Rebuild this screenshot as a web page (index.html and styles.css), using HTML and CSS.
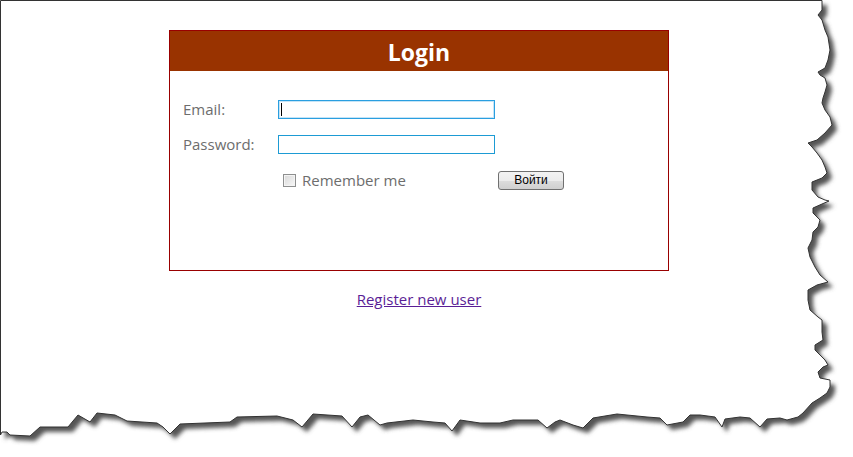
FILE: index.html
```html
<!DOCTYPE html>
<html>
<head>
<meta charset="utf-8">
<title>Login</title>
<link rel="stylesheet" href="styles.css">
</head>
<body>
<svg class="paper" width="853" height="457" viewBox="0 0 853 457" xmlns="http://www.w3.org/2000/svg">
  <defs>
    <filter id="blur" x="-5%" y="-5%" width="110%" height="110%">
      <feGaussianBlur stdDeviation="2"/>
    </filter>
  </defs>
  <g transform="translate(5,5)" filter="url(#blur)">
    <polygon fill="#555" points="0,0 822,0 822,10 818,15 822,20 825,30 828,37 830,50 828,60 825,68 818,72 820,75 825,78 827,85 825,92 823,98 822,103 825,110 830,117 832,125 825,133 817,140 808,143 812,147 817,153 822,160 825,167 827,173 822,178 812,182 812,190 818,197 825,200 829,201 822,204 813,208 813,213 820,220 818,227 813,232 812,240 808,248 810,257 815,267 820,275 828,282 817,285 808,290 808,300 810,310 818,317 822,320 822,332 823,340 815,345 815,350 820,355 825,360 828,365 823,367 818,372 820,378 830,380 830,387 827,393 820,398 812,403 803,413 798,417 787,420 780,418 767,419 760,427 750,418 740,417 725,419 722,427 715,417 700,415 690,415 683,422 667,425 660,418 647,417 617,414 593,418 583,428 573,425 560,420 555,422 547,428 538,420 513,420 500,423 480,423 460,420 452,431 445,423 433,422 413,420 387,423 380,425 368,415 360,417 352,427 342,416 313,414 302,427 293,420 277,416 237,417 230,422 180,424 170,434 163,427 157,423 127,421 115,415 97,413 90,422 78,415 68,427 40,427 30,436 10,435 7,432 2,432 0,435"/>
  </g>
  <polygon fill="#fff" stroke="#333" stroke-width="1" points="0.5,0.5 822,0.5 822,10 818,15 822,20 825,30 828,37 830,50 828,60 825,68 818,72 820,75 825,78 827,85 825,92 823,98 822,103 825,110 830,117 832,125 825,133 817,140 808,143 812,147 817,153 822,160 825,167 827,173 822,178 812,182 812,190 818,197 825,200 829,201 822,204 813,208 813,213 820,220 818,227 813,232 812,240 808,248 810,257 815,267 820,275 828,282 817,285 808,290 808,300 810,310 818,317 822,320 822,332 823,340 815,345 815,350 820,355 825,360 828,365 823,367 818,372 820,378 830,380 830,387 827,393 820,398 812,403 803,413 798,417 787,420 780,418 767,419 760,427 750,418 740,417 725,419 722,427 715,417 700,415 690,415 683,422 667,425 660,418 647,417 617,414 593,418 583,428 573,425 560,420 555,422 547,428 538,420 513,420 500,423 480,423 460,420 452,431 445,423 433,422 413,420 387,423 380,425 368,415 360,417 352,427 342,416 313,414 302,427 293,420 277,416 237,417 230,422 180,424 170,434 163,427 157,423 127,421 115,415 97,413 90,422 78,415 68,427 40,427 30,436 10,435 7,432 2,432 0.5,435"/>
</svg>

<main class="page">
  <section class="login-box">
    <h1 class="login-head">Login</h1>
    <form class="login-body">
      <div class="form-grid">
        <label class="field-label" for="email">Email:</label>
        <span class="input-wrap">
          <input class="text-input focused" id="email" type="text">
          <span class="caret"></span>
        </span>
        <label class="field-label" for="password">Password:</label>
        <input class="text-input" id="password" type="password">
      </div>
      <div class="action-row">
        <label class="remember">
          <span class="checkbox"></span>
          <span class="remember-text">Remember me</span>
        </label>
        <button class="submit-btn" type="button">Войти</button>
      </div>
    </form>
  </section>
  <div class="register">
    <a class="register-link" href="#">Register new user</a>
  </div>
</main>
</body>
</html>
```

FILE: styles.css
```css
html, body {
  margin: 0;
  padding: 0;
  background: #fff;
}

body {
  width: 853px;
  height: 457px;
  overflow: hidden;
  position: relative;
  font-family: "Open Sans", "Noto Sans", sans-serif;
}

.paper {
  position: absolute;
  top: 0;
  left: 0;
  z-index: 0;
}

.page {
  position: relative;
  z-index: 1;
  padding: 30px 0 0 169px;
  width: 500px;
}

.login-box {
  width: 498px;
  border: 1px solid #990000;
  background: #fff;
}

.login-head {
  margin: 0;
  height: 40px;
  line-height: 42px;
  background: #993300;
  color: #fff;
  font-size: 23px;
  font-weight: 700;
  text-align: center;
}

.login-body {
  box-sizing: border-box;
  height: 199px;
  padding: 29px 0 0 13px;
  margin: 0;
}

.form-grid {
  display: grid;
  grid-template-columns: 95px 217px;
  row-gap: 16px;
  align-items: center;
}

.field-label {
  font-size: 15px;
  color: #6d6d6d;
  line-height: 19px;
}

.input-wrap {
  position: relative;
  display: block;
  height: 19px;
}

.text-input {
  display: block;
  box-sizing: border-box;
  width: 217px;
  height: 19px;
  margin: 0;
  padding: 0;
  border: 1px solid #1d9bd4;
  background: #fff;
  outline: none;
}

.text-input.focused {
  border-color: #2a9fe0;
  box-shadow: 0 0 0 1px rgba(160, 210, 240, 0.6) inset;
}

.caret {
  position: absolute;
  left: 3px;
  top: 3px;
  width: 1px;
  height: 13px;
  background: #000;
}

.action-row {
  display: flex;
  align-items: center;
  margin-top: 17px;
  padding-left: 95px;
}

.remember {
  display: flex;
  align-items: center;
  width: 220px;
  box-sizing: border-box;
  padding-left: 5px;
}

.checkbox {
  box-sizing: border-box;
  width: 13px;
  height: 13px;
  border: 1px solid #8e8f8f;
  background: linear-gradient(135deg, #d8d8d8, #f8f8f8);
  box-shadow: inset 0 0 0 1px #f4f4f4;
  margin-right: 6px;
}

.remember-text {
  font-size: 15px;
  color: #6d6d6d;
  line-height: 19px;
}

.submit-btn {
  box-sizing: border-box;
  width: 66px;
  height: 19px;
  padding: 0;
  border: 1px solid #707070;
  border-radius: 3px;
  background: linear-gradient(#f3f3f3 0%, #ececec 50%, #dddddd 51%, #cfcfcf 100%);
  font-family: "Liberation Sans", Arial, sans-serif;
  font-size: 12px;
  color: #000;
  line-height: 17px;
}

.register {
  width: 500px;
  text-align: center;
  margin-top: 17px;
}

.register-link {
  font-size: 15px;
  color: #5a1e96;
  text-decoration: underline;
}
```
